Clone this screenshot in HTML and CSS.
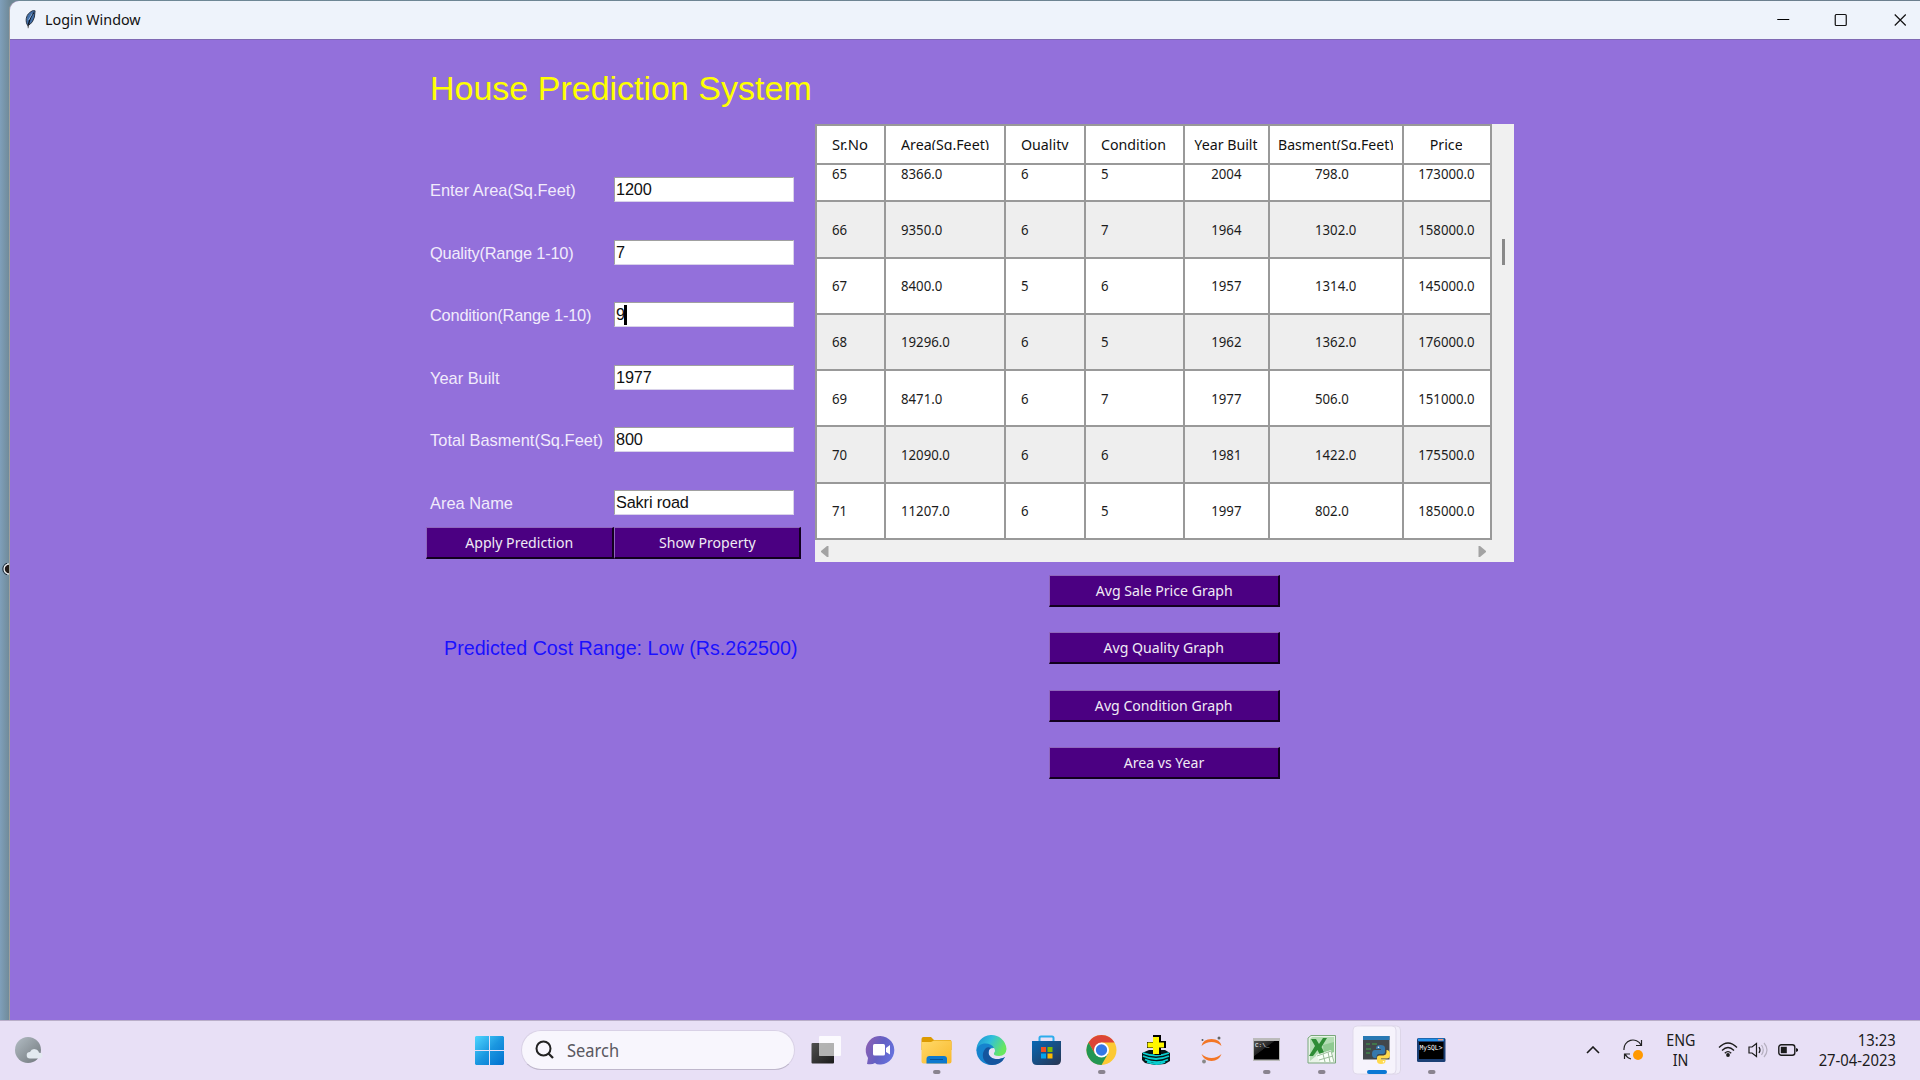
FILE: index.html
```html
<!DOCTYPE html>
<html lang="en">
<head>
<meta charset="utf-8">
<title>Login Window</title>
<link rel="stylesheet" href="styles.css">
</head>
<body>
<div class="desktop">
<svg class="stray" viewBox="0 0 8 14"><circle cx="8" cy="7" r="5" fill="#211b18" stroke="#e5e6e8" stroke-width="1.6"/><path d="M6 1.300A6 6 0 0 0 6 12.700" fill="none" stroke="#1c2b38"/></svg>
<div class="window">
  <header class="titlebar">
    <svg class="feather" viewBox="0 0 12 21"><path d="M3 17C0 13 1 6 5 3Q8 0 11 1Q11 9 8 13Q6 16 3 17z" fill="#426fa8" stroke="#222b38"/><path d="M9.500 3Q5 8 3.500 18" fill="none" stroke="#0a1220" stroke-width="1.500"/><path d="M8 4L4 11" stroke="#9cc4ef"/><path d="M3.500 16V20" stroke="#555"/></svg>
    <span class="caption">Login Window</span>
    <div class="controls">
      <svg viewBox="0 0 58 38"><path d="M23 18.500H35" stroke="#000"/></svg>
      <svg viewBox="0 0 58 38"><rect x="23" y="13.500" width="11" height="11" rx="1" fill="none" stroke="#111" stroke-width="1.200"/></svg>
      <svg viewBox="0 0 58 38"><path d="M23.500 13.500L34.500 24.500M34.500 13.500L23.500 24.500" stroke="#111" stroke-width="1.200"/></svg>
    </div>
  </header>
  <main class="content">
    <section class="left">
      <h1 class="title">House Prediction System</h1>
      <form class="form">
        <label>Enter Area(Sq.Feet)</label><div class="entry">1200</div>
        <label class="tight">Quality(Range 1-10)</label><div class="entry">7</div>
        <label class="tight">Condition(Range 1-10)</label><div class="entry">9<i class="caret"></i></div>
        <label>Year Built</label><div class="entry">1977</div>
        <label class="wide">Total Basment(Sq.Feet)</label><div class="entry">800</div>
        <label>Area Name</label><div class="entry">Sakri road</div>
      </form>
      <div class="actions">
        <div class="btn"><span>Apply Prediction</span></div>
        <div class="btn"><span>Show Property</span></div>
      </div>
      <p class="result">Predicted Cost Range: Low (Rs.262500)</p>
    </section>
    <section class="right">
      <div class="sheet">
        <div class="grid">
          <div class="row head"><div><span>Sr.No</span></div><div><span>Area(Sq.Feet)</span></div><div><span>Quality</span></div><div><span>Condition</span></div><div><span>Year Built</span></div><div><span>Basment(Sq.Feet)</span></div><div><span>Price</span></div></div>
          <div class="row cut"><div><span>65</span></div><div><span>8366.0</span></div><div><span>6</span></div><div><span>5</span></div><div><span>2004</span></div><div><span>798.0</span></div><div><span>173000.0</span></div></div>
          <div class="row alt"><div><span>66</span></div><div><span>9350.0</span></div><div><span>6</span></div><div><span>7</span></div><div><span>1964</span></div><div><span>1302.0</span></div><div><span>158000.0</span></div></div>
          <div class="row"><div><span>67</span></div><div><span>8400.0</span></div><div><span>5</span></div><div><span>6</span></div><div><span>1957</span></div><div><span>1314.0</span></div><div><span>145000.0</span></div></div>
          <div class="row alt"><div><span>68</span></div><div><span>19296.0</span></div><div><span>6</span></div><div><span>5</span></div><div><span>1962</span></div><div><span>1362.0</span></div><div><span>176000.0</span></div></div>
          <div class="row"><div><span>69</span></div><div><span>8471.0</span></div><div><span>6</span></div><div><span>7</span></div><div><span>1977</span></div><div><span>506.0</span></div><div><span>151000.0</span></div></div>
          <div class="row alt"><div><span>70</span></div><div><span>12090.0</span></div><div><span>6</span></div><div><span>6</span></div><div><span>1981</span></div><div><span>1422.0</span></div><div><span>175500.0</span></div></div>
          <div class="row"><div><span>71</span></div><div><span>11207.0</span></div><div><span>6</span></div><div><span>5</span></div><div><span>1997</span></div><div><span>802.0</span></div><div><span>185000.0</span></div></div>
        </div>
        <div class="vbar"><i></i></div>
        <div class="hbar">
          <svg viewBox="0 0 8 11"><path d="M7.500 0V11H6L0 6V5L6 0z" fill="#a3a3a3"/></svg>
          <svg viewBox="0 0 8 11"><path d="M.5 0V11H2L8 6V5L2 0z" fill="#a3a3a3"/></svg>
        </div>
      </div>
      <div class="graphs">
        <div class="btn"><span>Avg Sale Price Graph</span></div>
        <div class="btn"><span>Avg Quality Graph</span></div>
        <div class="btn"><span>Avg Condition Graph</span></div>
        <div class="btn"><span>Area vs Year</span></div>
      </div>
    </section>
  </main>
</div>
</div>
<footer class="taskbar">
  <svg class="defs"><defs>
    <linearGradient id="win" gradientUnits="userSpaceOnUse" x1="0" y1="0" x2="29" y2="29"><stop offset="0" stop-color="#4fd6ff"/><stop offset=".5" stop-color="#1b97e0"/><stop offset="1" stop-color="#0070cf"/></linearGradient>
    <linearGradient id="gray" x1="0" y1="0" x2="1" y2="1"><stop offset="0" stop-color="#b3bdc4"/><stop offset="1" stop-color="#70777c"/></linearGradient>
    <linearGradient id="dark" x1="0" y1="0" x2="1" y2="1"><stop offset="0" stop-color="#505050"/><stop offset="1" stop-color="#1b1b1b"/></linearGradient>
    <linearGradient id="chat" x1="0" y1=".3" x2="1" y2=".7"><stop offset="0" stop-color="#8a60b4"/><stop offset=".5" stop-color="#6360c4"/><stop offset="1" stop-color="#6673e0"/></linearGradient>
    <linearGradient id="fold" x1="0" y1="0" x2="1" y2="1"><stop offset="0" stop-color="#ffd969"/><stop offset="1" stop-color="#f9b92c"/></linearGradient>
    <linearGradient id="edge" x1="0" y1="0" x2="1" y2=".4"><stop offset="0" stop-color="#1b8ed4"/><stop offset=".5" stop-color="#31bfdb"/><stop offset="1" stop-color="#68e75e"/></linearGradient>
    <linearGradient id="store" x1="0" y1="0" x2="1" y2="1"><stop offset="0" stop-color="#0868b5"/><stop offset="1" stop-color="#283450"/></linearGradient>
    <linearGradient id="con" x1="0" y1="0" x2="1" y2="1"><stop offset="0" stop-color="#555"/><stop offset=".4" stop-color="#222"/><stop offset=".42" stop-color="#000"/></linearGradient>
  </defs></svg>
  <svg class="weather" viewBox="0 0 28 26"><ellipse cx="13" cy="13" rx="13" ry="13" fill="url(#gray)"/><path d="M15 21.500a3.300 3.300 0 0 1 0-6.600a4.800 4.800 0 0 1 9 .8a2.900 2.900 0 0 1 1 5.800z" fill="#e3eaf0"/></svg>
  <svg class="start" viewBox="0 0 29 29"><g fill="url(#win)"><path d="M1 0H14V14H0V1z"/><path d="M15 0H28L29 1V14H15z"/><path d="M0 15H14V29H1L0 28z"/><path d="M15 15H29V28L28 29H15z"/></g></svg>
  <div class="search"><svg viewBox="0 0 20 20"><circle cx="8.500" cy="8.500" r="7" fill="none" stroke="#222" stroke-width="2"/><path d="M13.500 13.500L18 18" stroke="#222" stroke-width="2.300"/></svg><span>Search</span></div>
  <nav class="apps">
    <svg viewBox="0 0 55 60"><rect x="12.500" y="23" width="22.500" height="20.500" rx="1" fill="url(#dark)"/><rect x="20" y="16" width="22" height="20" rx="1" fill="#fff" opacity=".82"/><path d="M20 23H35V36H20z" fill="#999" opacity=".62"/></svg>
    <svg viewBox="0 0 55 60"><path d="M13 44L14 38A14.300 14.300 0 1 1 27 44.500Q23 45 21 43Q18 45 13 44z" fill="url(#chat)"/><rect x="19" y="24" width="12" height="11.500" rx="1.500" fill="#fff"/><path d="M32 28L36 25V34.500L32 32z" fill="#fff"/></svg>
    <svg viewBox="0 0 55 60"><path d="M12.500 19q0-2 2-2H22l3 3H41q1.500 0 1.500 2V30H12.500z" fill="#dc9a00"/><path d="M12.500 22H22l3-1.500H41q1.500 0 1.500 1.500V41.500q0 2-2 2H14.500q-2 0-2-2z" fill="url(#fold)"/><path d="M17.500 43.500V39q0-3 3-3H35q3 0 3 3V43.500z" fill="#0d79ce"/><path d="M21 39.500H34" stroke="#075399"/><rect class="dot" x="24" y="50" width="7.500" height="4" rx="2"/></svg>
    <svg viewBox="0 0 55 60"><path d="M12.500 31A15 15 0 1 1 42.500 29Q42 36 35 36Q29 36 30 33Q32 31 30 28z" fill="url(#edge)"/><path d="M12.500 31C12.500 22 27 21 30 28Q25 27 24.500 33C25 39 34 41 41 37Q36 45 27.500 45C19 45 12.500 38 12.500 31z" fill="#1683ce"/><path d="M22 28C16 34 19 44 28 45Q37 45 41 37C34 41 25 39 24.500 33Q24.500 29 27 28Q24 26.500 22 28z" fill="#15559e"/></svg>
    <svg viewBox="0 0 55 60"><path d="M20.500 23V18q0-1.500 1.500-1.500H33q1.500 0 1.500 1.500V23" fill="none" stroke="#2dacec" stroke-width="2"/><path d="M13 21H42V40q0 5-5 5H18q-5 0-5-5z" fill="url(#store)"/><path d="M22 27h5v5h-5z" fill="#f25022"/><path d="M28.500 27h5v5h-5z" fill="#7fba00"/><path d="M22 33.500h5v5h-5z" fill="#00a4ef"/><path d="M28.500 33.500h5v5h-5z" fill="#ffb900"/></svg>
    <svg viewBox="0 0 55 60"><circle cx="27.500" cy="30" r="15" fill="#fcc934"/><path d="M14.500 22.500A15 15 0 0 1 40.500 22.500H27.500L21 33.800z" fill="#dc4437"/><path d="M14.500 22.500A15 15 0 0 0 27.500 45L34 33.800L21 33.800z" fill="#229653"/><circle cx="27.500" cy="30" r="7.500" fill="#fff"/><circle cx="27.500" cy="30" r="5.700" fill="#3478e5"/><rect class="dot" x="24" y="50" width="7.500" height="4" rx="2"/></svg>
    <svg viewBox="0 0 55 60"><path d="M13 33L20 30H36L41 33V41L36 44L26 45L16 43L13 40z" fill="#061616"/><path d="M14 33Q27 38 40 33M14 36Q27 42 40 36M16 39.500Q28 45 39 39.500M18 42Q28 46 36 42" fill="none" stroke="#09cfd0" stroke-width="1.800"/><path d="M24 15H32V21H37V28H32V35H26L24 33V28H18V22H24z" fill="#000"/><path d="M24 17H30V22.500H35V27.500H30V34H24V27.500H18.500V22.500H24z" fill="#fff700"/></svg>
    <svg viewBox="0 0 55 60"><path d="M17.500 26Q19 19 27.500 19Q36 19 37.500 26Q33 22 27.500 22Q22 22 17.500 26zM17.500 34Q22 38 27.500 38Q33 38 37.500 34Q35 41 27.500 41Q20 41 17.500 34z" fill="#f37626"/><circle cx="35" cy="18" r="1.500" fill="#666"/><circle cx="18.500" cy="20" r="1" fill="#555"/><circle cx="20" cy="41.500" r="1.900" fill="#888"/></svg>
    <svg viewBox="0 0 55 60"><rect x="14" y="18" width="27" height="23" fill="#bbb"/><path d="M15 21H40V39.500H15z" fill="url(#con)"/><text x="16" y="26.500" class="tiny">C:\_</text><rect class="dot" x="24" y="50" width="7.500" height="4" rx="2"/></svg>
    <svg viewBox="0 0 55 60"><path d="M17 15.500H41.500V43H14V18z" fill="#e9f3e8" stroke="#79a77c"/><path d="M18 17H40V26L28 31L16 41V19z" fill="#b3dcb4"/><path d="M29 25L40 22V32L30 36z" fill="#8fca91"/><path d="M17 19H22L25 24L29 18H33L27.500 27L32 36H26.500L23.500 30L19 36H15L21 26z" fill="#2e8c35"/><path d="M22 35L37 30L41 42H26z" fill="#f8fff7"/><path d="M23 36L37 31L40 42M25 40L39 36M29 34L31 42M34 32L36 42" fill="none" stroke="#9bbc9a"/><rect class="dot" x="24" y="50" width="7.500" height="4" rx="2"/></svg>
    <svg viewBox="0 0 55 60"><rect x="9" y="6" width="42.500" height="48" rx="4" fill="#f1eefa" stroke="#ddd6e8"/><rect x="4" y="6" width="43" height="48" rx="4" fill="#f6f3fc" stroke="#dfd9ea"/><path d="M14 16H40.500V39.500H14z" fill="#42474b"/><path d="M14 16H40.500V20H14z" fill="#2878b3"/><path d="M17 24H21M23 24H28M17 29H22M17 33H21" stroke="#42864b" stroke-width="1.400"/><path d="M27 28Q27 25 31.500 25Q36 25 36 28V32Q36 34 34 34H30Q27.500 34 27.500 38H26Q23 38 23 34Q23 30 26 30H32V29H27z" fill="#3678ad"/><path d="M37.500 30Q41 30 41 34.500Q41 38.500 38 38.500H32V39.500H36.500V41Q36.500 44 32 44Q28 44 28 41V37.500Q28 35.500 30.500 35.500H34.500Q37.500 35 37.500 32z" fill="#ffd94d"/><circle cx="29.500" cy="27.200" r=".8" fill="#fff"/><circle cx="34.500" cy="41.800" r=".8" fill="#fff"/><rect x="18" y="50" width="20" height="4" rx="2" fill="#0a78d4"/></svg>
    <svg viewBox="0 0 55 60"><rect x="13" y="18" width="28.500" height="24" rx="1.500" fill="#1b3f75"/><path d="M14 18.500H40V21H14z" fill="#2290e8"/><path d="M34 19h5v1.500h-5z" fill="#e79a83"/><path d="M15 22H39.500V39H15z" fill="#000"/><text x="15.500" y="30" class="mysql" textLength="23" lengthAdjust="spacingAndGlyphs">MySQL&gt;</text><rect class="dot" x="24" y="50" width="7.500" height="4" rx="2"/></svg>
  </nav>
  <div class="tray">
    <svg class="ticon chev" viewBox="0 0 14 8"><path d="M1 7L7 1L13 7" fill="none" stroke="#1b1b1b" stroke-width="1.600"/></svg>
    <svg class="ticon sync" viewBox="0 0 20 22"><path d="M1 11A9 9 0 0 1 18 6M18.500 1V6.500H13M8 20Q4 19 2 15M1.500 20V15H7" fill="none" stroke="#222" stroke-width="1.200"/><circle cx="15" cy="16" r="5" fill="#ff9900"/></svg>
    <div class="lang"><span>ENG</span><span>IN</span></div>
    <svg class="ticon wifi" viewBox="0 0 20 15"><path d="M1 5.500Q10-3.500 19 5.500M4 8.500Q10 2.500 16 8.500M6.800 11.200Q10 8 13.200 11.200" fill="none" stroke="#1b1b1b" stroke-width="1.300"/><circle cx="10" cy="13" r="1.900" fill="#1b1b1b"/></svg>
    <svg class="ticon vol" viewBox="0 0 21 16"><path d="M1 5H4L8.500 1.500V14.500L4 11H1z" fill="none" stroke="#1b1b1b" stroke-width="1.200"/><path d="M11 5Q13 8 11 11" fill="none" stroke="#1b1b1b" stroke-width="1.200"/><path d="M13.500 3Q17 8 13.500 13M16 1Q22 8 16 15" fill="none" stroke="#b5afbf" stroke-width="1.200"/></svg>
    <svg class="ticon bat" viewBox="0 0 20 12"><rect x=".8" y=".8" width="16" height="10.400" rx="2.500" fill="none" stroke="#1b1b1b" stroke-width="1.400"/><rect x="2.800" y="2.800" width="6" height="6.400" fill="#1b1b1b"/><path d="M18 4V8L20 7V5z" fill="#1b1b1b"/></svg>
    <div class="clock"><span>13:23</span><span>27-04-2023</span></div>
  </div>
</footer>
</body>
</html>
```
FILE: styles.css
```css
* { box-sizing: border-box; }
body { margin: 0; width: 1920px; height: 1080px; overflow: hidden; font-family: "Noto Sans", sans-serif; display: flex; flex-direction: column; }
.desktop { position: relative; height: 1020px; padding: 1px 0 0 10px; background: linear-gradient(90deg, #7f9fba 0, #6e8896 10px, #6c7f8e 100%); }
.stray { position: absolute; left: 1px; top: 562px; width: 8px; height: 14px; }
.window { height: 1019px; border-radius: 9px 0 0 0; overflow: hidden; background: #9370db; box-shadow: -1px 0 0 #9f9f9f; display: flex; flex-direction: column; }
.titlebar { flex: none; height: 38px; display: flex; align-items: center; background: #eef3fb; }
.feather { width: 11px; height: 21px; margin: -2px 0 0 15px; }
.caption { margin-left: 9px; padding-bottom: 2px; font-size: 15px; color: #111; transform: scaleX(.955); transform-origin: 0 50%; }
.controls { margin: 0 -9px 0 auto; display: flex; }
.controls svg { width: 58.500px; height: 38px; }
.content { flex: 1; display: flex; padding-left: 416px; border-top: 1px solid #7f69b4; }

.left { width: 389px; padding-top: 28px; }
.title { margin: 0 0 0 4px; font: 400 34px/40px "Liberation Sans", Arial, sans-serif; color: #ff0; white-space: nowrap; }
.form { display: grid; grid-template-columns: 184px 180px; grid-auto-rows: 62.5px; padding: 69px 0 0 4px; height: 419px; font-family: "Liberation Sans", Arial, sans-serif; }
.form label { font-size: 16.4px; line-height: 27.200px; color: #f1ebfb; white-space: nowrap; }
.form .tight { letter-spacing: -.22px; }
.form .wide { letter-spacing: .04px; }
.entry { height: 25px; background: #fff; border: 1px solid #d9d2ea; border-top: 1.500px solid #a0a0a0; border-left-color: #a0a0a0; padding-left: 1px; font-size: 16.300px; line-height: 23px; letter-spacing: -.15px; color: #111; display: flex; align-items: center; }
.caret { width: 3px; height: 20px; margin-left: -1px; background: #000; }
.actions { display: flex; }
.btn { height: 32px; background: #4b0082; border: 1px solid #8f67bd; border-right: 2px solid #12001f; border-bottom: 2px solid #12001f; color: #f0eaf5; font-size: 14.7px; display: flex; align-items: center; justify-content: center; white-space: nowrap; }
.btn span { transform: scaleX(.96); padding-bottom: 1px; }
.actions .btn { width: 187.700px; }
.result { margin: 76px 0 0 18px; font: 19.7px/26px "Liberation Sans", Arial, sans-serif; color: #1a10ff; white-space: nowrap; }

.right { padding-top: 84px; width: 699px; }
.sheet { display: grid; grid-template-columns: 677px 22px; grid-template-rows: 416px 22px; background: #f0f0f0; }
.grid { border: 2px solid #999; border-right: 0; border-bottom: 0; font-size: 15.2px; color: #1c1c1c; overflow: hidden; }
.row { display: grid; grid-template-columns: 69px 120px 80px 99px 84.5px 134px 88.5px; height: 56.25px; background: #fff; }
.row.alt { background: #eee; }
.row > div { border: solid #999; border-width: 0 2px 2px 0; padding: 0 0 1px 15px; display: flex; align-items: center; overflow: hidden; white-space: nowrap; }
.row span { transform: scaleX(.87); transform-origin: 0 50%; }
.row > div:nth-child(5), .row > div:nth-child(7) { padding-left: 0; justify-content: center; }
.row > div:nth-child(5) span, .row > div:nth-child(7) span { transform-origin: 50% 50%; }
.row > div:nth-child(6) { padding-left: 45px; }
.row.head { height: 38.500px; color: #111; font-size: 14.8px; }
.row.head > div { align-items: flex-start; padding-top: 7px; }
.row.head span { transform: scaleX(.96); height: 17px; line-height: 23px; overflow: hidden; }
.row.head > div:nth-child(1) span { transform: scaleX(1); }
.row.head > div:nth-child(6) { padding-left: 0; justify-content: center; }
.row.head > div:nth-child(6) span { transform-origin: 50% 50%; transform: scaleX(.95); }
.row.head > div:nth-child(7) { padding-right: 1px; }
.row.cut { height: 37.750px; }
.row.cut > div { align-items: flex-end; padding-bottom: 0; }
.row.cut span { height: 54px; line-height: 54px; }
.vbar { grid-row: 1 / 3; grid-column: 2; padding: 115px 0 0 10px; }
.vbar i { display: block; width: 3px; height: 26px; background: #898989; }
.hbar { display: flex; justify-content: space-between; align-items: center; padding: 0 6px 0 6px; }
.hbar svg { width: 8px; height: 11px; }
.graphs { padding: 12.500px 0 0 234px; display: flex; flex-direction: column; gap: 25.500px; }
.graphs .btn { width: 231px; }

.taskbar { position: relative; flex: none; height: 60px; background: #e8e0f6; border-top: 1px solid #b9aec9; display: flex; align-items: center; }
.defs { position: absolute; width: 0; height: 0; }
.weather { width: 28px; height: 26px; margin: -2px 0 0 15px; }
.start { width: 29px; height: 29px; margin-left: 432px; }
.search { width: 274px; height: 40px; margin: -1px 0 0 17px; border-radius: 20px; background: #f8f6fd; border: 1px solid #d9d1e6; border-bottom-color: #bfb7cc; display: flex; align-items: center; padding-left: 13px; }
.search svg { width: 20px; height: 20px; }
.search span { margin-left: 12px; padding-bottom: 1px; font-size: 17.500px; color: #5a5860; transform: scaleX(.94); transform-origin: 0 50%; }
.apps { display: flex; margin-left: 3.500px; height: 60px; margin-top: -1px; }
.apps svg { width: 55px; height: 60px; }
.dot { fill: #89838f; }
.tiny { font: 6px "Liberation Mono", monospace; fill: #fff; }
.mysql { font: 7px "DejaVu Sans Mono", monospace; fill: #fff; }
.tray { margin: -2px 0 0 auto; display: flex; align-items: center; padding-right: 24px; color: #1b1b1b; }
.ticon { flex: none; }
.chev { width: 14px; height: 8px; margin-right: 23px; }
.sync { width: 20px; height: 22px; margin-right: 23px; }
.lang { width: 30px; font-size: 15.500px; line-height: 20px; margin-right: 22px; display: flex; flex-direction: column; align-items: center; }
.lang span { transform: scaleX(.92); }
.wifi { width: 20px; height: 15px; margin-right: 10px; }
.vol { width: 21px; height: 16px; margin-right: 9px; }
.bat { width: 20px; height: 12px; margin-right: 20px; }
.clock { width: 78px; display: flex; flex-direction: column; align-items: flex-end; font-size: 15.500px; line-height: 20px; white-space: nowrap; }
.clock span { transform: scaleX(.955); transform-origin: 100% 50%; }
```
